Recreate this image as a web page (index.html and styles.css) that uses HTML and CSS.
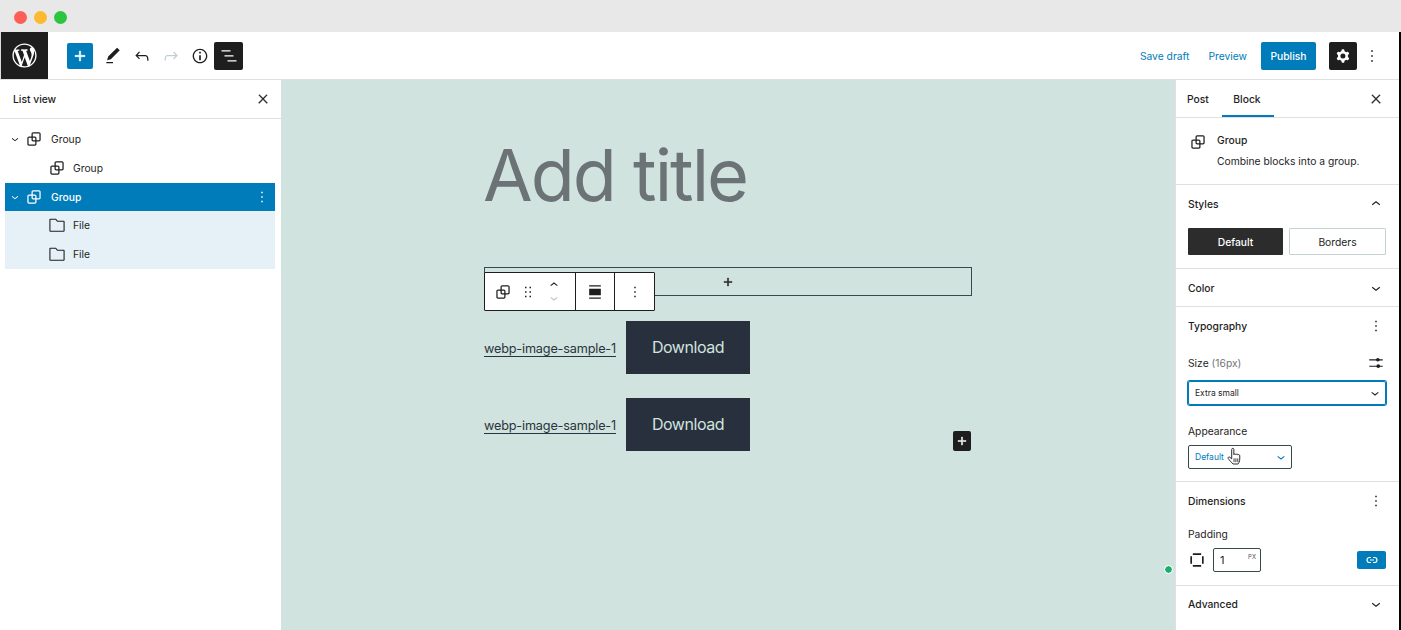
FILE: index.html
```html
<!DOCTYPE html>
<html lang="en">
<head>
<meta charset="utf-8">
<title>Add title</title>
<link rel="stylesheet" href="styles.css">
</head>
<body>
<svg class="sprite" aria-hidden="true">
  <symbol id="i-group" viewBox="0 0 24 24"><path d="M18 4h-7c-1.100 0-2 .9-2 2v3H6c-1.100 0-2 .9-2 2v7c0 1.100.9 2 2 2h7c1.100 0 2-.9 2-2v-3h3c1.100 0 2-.9 2-2V6c0-1.100-.9-2-2-2zm-4.500 14c0 .3-.2.5-.5.5H6c-.3 0-.5-.2-.5-.5v-7c0-.3.2-.5.5-.5h3V13c0 1.100.9 2 2 2h2.500v3zm0-4.500H11c-.3 0-.5-.2-.5-.5v-2.500H13c.3 0 .5.2.5.5v2.500zm5-.5c0 .3-.2.5-.5.5h-3V11c0-1.100-.9-2-2-2h-2.500V6c0-.3.2-.5.5-.5h7c.3 0 .5.2.5.5v7z"/></symbol>
  <symbol id="i-close" viewBox="0 0 24 24"><path stroke="currentColor" stroke-width=".9" d="M13 11.800l6.100-6.300-1-1-6.100 6.200-6.100-6.200-1 1 6.100 6.300-6.500 6.700 1 1 6.500-6.600 6.500 6.600 1-1z"/></symbol>
  <symbol id="i-more" viewBox="0 0 24 24"><path d="M13 19h-2v-2h2v2zm0-6h-2v-2h2v2zm0-6h-2V5h2v2z"/></symbol>
  <symbol id="i-down" viewBox="0 0 24 24"><path d="M17.500 11.600L12 16l-5.500-4.400.9-1.200L12 14l4.500-3.600 1 1.200z"/></symbol>
  <symbol id="i-up" viewBox="0 0 24 24"><path d="M6.500 12.400L12 8l5.500 4.400-.9 1.200L12 10l-4.500 3.600-1-1.200z"/></symbol>
  <symbol id="i-plus" viewBox="0 0 24 24"><path stroke="currentColor" stroke-width=".7" d="M18 11.200h-5.200V6h-1.600v5.200H6v1.600h5.200V18h1.600v-5.200H18z"/></symbol>
  <symbol id="i-folder" viewBox="0 0 24 24"><path fill="none" stroke="currentColor" stroke-width="1.300" d="M4 19.500h16a.5.5 0 00.5-.5V8a.5.5 0 00-.5-.5h-7.500L10.500 5H4a.5.5 0 00-.5.5V19a.5.5 0 00.5.5z"/></symbol>
</svg>

<div class="chrome">
  <span class="light light-red"></span>
  <span class="light light-yellow"></span>
  <span class="light light-green"></span>
</div>

<div class="app">
  <header class="topbar">
    <a class="logo">
      <svg class="logo-svg" viewBox="-2 -2 24 24"><path d="M20 10c0-5.510-4.490-10-10-10C4.480 0 0 4.490 0 10c0 5.520 4.480 10 10 10 5.510 0 10-4.480 10-10zM7.780 15.370L4.370 6.220c.55-.02 1.170-.08 1.170-.08.5-.06.44-1.130-.06-1.110 0 0-1.450.11-2.370.11-.18 0-.37 0-.58-.01C4.120 2.690 6.870 1.110 10 1.110c2.330 0 4.450.87 6.050 2.340-.68-.11-1.650.39-1.650 1.580 0 .74.45 1.360.9 2.100.35.61.55 1.360.55 2.460 0 1.490-1.400 5-1.400 5l-3.030-8.370c.54-.02.82-.17.82-.17.5-.05.44-1.250-.06-1.220 0 0-1.440.12-2.380.12-.87 0-2.330-.12-2.330-.12-.5-.03-.56 1.200-.06 1.220l.92.08 1.260 3.410zM17.410 10c.24-.64.74-1.870.43-4.250.7 1.290 1.050 2.710 1.050 4.250 0 3.290-1.730 6.240-4.400 7.780.97-2.590 1.940-5.200 2.920-7.780zM6.100 18.090C3.120 16.650 1.110 13.530 1.110 10c0-1.300.23-2.480.72-3.590C3.250 10.300 4.670 14.200 6.100 18.090zm4.030-6.630l2.580 6.980c-.86.29-1.760.45-2.710.45-.79 0-1.570-.11-2.290-.33.81-2.380 1.620-4.740 2.420-7.100z"/></svg>
    </a>
    <div class="tools-left">
      <button class="inserter"><svg class="ic20" viewBox="0 0 24 24"><path d="M18 11.200h-5.200V6h-1.600v5.200H6v1.600h5.200V18h1.600v-5.200H18z" stroke="currentColor" stroke-width=".6"/></svg></button>
      <div class="tool-slots">
        <span class="slot"><svg class="ic20" viewBox="0 0 24 24"><path d="M20.100 5.100L16.900 2 6.200 12.700l-1.300 4.400 4.500-1.300L20.100 5.100zM4 20.800h8v-1.500H4v1.500z"/></svg></span>
        <span class="slot"><svg class="ic20" viewBox="0 0 24 24"><path d="M18.300 11.700c-.6-.6-1.400-.9-2.300-.9H6.700l2.900-3.300-1.100-1-4.500 5L8.500 16l1-1-2.700-2.700H16c.5 0 .9.2 1.300.5 1 1 1 3.400 1 4.500v.3h1.500v-.2c0-1.500 0-4.300-1.500-5.700z"/></svg></span>
        <span class="slot slot-off"><svg class="ic20" viewBox="0 0 24 24"><path d="M15.600 6.500l-1.100 1 2.900 3.300H8c-.9 0-1.700.3-2.300.9-1.400 1.500-1.400 4.200-1.400 5.600v.2h1.500v-.3c0-1.100 0-3.500 1-4.500.3-.3.7-.5 1.300-.5h9.200L14.500 15l1.100 1.100 4.600-4.600-4.600-5z"/></svg></span>
        <span class="slot"><svg class="ic20" viewBox="0 0 24 24"><path d="M12 3.200c-4.800 0-8.800 3.900-8.800 8.800 0 4.800 3.900 8.800 8.800 8.800 4.800 0 8.800-3.900 8.800-8.800 0-4.800-4-8.800-8.800-8.800zm0 16c-4 0-7.200-3.300-7.200-7.200C4.800 8 8 4.800 12 4.800s7.200 3.300 7.200 7.200c0 4-3.200 7.200-7.200 7.200zM11 17h2v-6h-2v6zm0-8h2V7h-2v2z"/></svg></span>
      </div>
      <button class="dark-btn listview-btn"><svg class="ic20" viewBox="0 0 24 24"><path d="M13.800 5.200H3v1.500h10.800V5.200zm-3.600 12v1.500H21v-1.500H10.200zm7.200-6H6.600v1.500h10.800v-1.500z"/></svg></button>
    </div>
    <div class="tools-right">
      <a class="link save-link">Save draft</a>
      <a class="link preview-link">Preview</a>
      <button class="publish">Publish</button>
      <button class="dark-btn gear-btn"><svg class="ic20" viewBox="0 0 24 24"><path fill-rule="evenodd" clip-rule="evenodd" d="M10.289 4.836A1 1 0 0111.275 4h1.306a1 1 0 01.987.836l.244 1.466c.787.26 1.503.679 2.108 1.218l1.393-.522a1 1 0 011.216.437l.653 1.130a1 1 0 01-.23 1.273l-1.148.944a6.025 6.025 0 010 2.435l1.149.946a1 1 0 01.23 1.272l-.653 1.130a1 1 0 01-1.216.437l-1.394-.522c-.605.54-1.320.958-2.108 1.218l-.244 1.466a1 1 0 01-.987.836h-1.306a1 1 0 01-.986-.836l-.244-1.466a5.995 5.995 0 01-2.108-1.218l-1.394.522a1 1 0 01-1.217-.436l-.653-1.131a1 1 0 01.23-1.272l1.149-.946a6.026 6.026 0 010-2.435l-1.148-.944a1 1 0 01-.23-1.272l.653-1.131a1 1 0 011.217-.437l1.393.522a5.994 5.994 0 012.108-1.218l.244-1.466zM14.929 12a3 3 0 11-6 0 3 3 0 016 0z"/></svg></button>
      <span class="top-more"><svg class="ic20"><use href="#i-more"/></svg></span>
    </div>
  </header>

  <div class="workspace">
    <aside class="listview">
      <div class="lv-head">
        <span class="lv-title">List view</span>
        <svg class="ic14"><use href="#i-close"/></svg>
      </div>
      <div class="lv-tree">
        <div class="lv-row">
          <svg class="lv-chev"><use href="#i-down"/></svg>
          <svg class="lv-ic"><use href="#i-group"/></svg>
          <span>Group</span>
        </div>
        <div class="lv-row lv-child">
          <svg class="lv-ic"><use href="#i-group"/></svg>
          <span>Group</span>
        </div>
        <div class="lv-row lv-selected">
          <svg class="lv-chev"><use href="#i-down"/></svg>
          <svg class="lv-ic"><use href="#i-group"/></svg>
          <span class="lv-name">Group</span>
          <svg class="lv-more"><use href="#i-more"/></svg>
        </div>
        <div class="lv-row lv-child lv-tint">
          <svg class="lv-ic"><use href="#i-folder"/></svg>
          <span>File</span>
        </div>
        <div class="lv-row lv-child lv-tint">
          <svg class="lv-ic"><use href="#i-folder"/></svg>
          <span>File</span>
        </div>
      </div>
    </aside>

    <main class="canvas">
      <div class="column">
        <h1 class="post-title">Add title</h1>
        <div class="group-box">
          <svg class="ic16"><use href="#i-plus"/></svg>
          <div class="block-toolbar">
            <div class="bt-seg bt-seg-main">
              <svg class="ic20"><use href="#i-group"/></svg>
              <svg class="ic18" viewBox="0 0 24 24"><path d="M8 7h2V5H8v2zm0 6h2v-2H8v2zm0 6h2v-2H8v2zm6-14v2h2V5h-2zm0 8h2v-2h-2v2zm0 6h2v-2h-2v2z"/></svg>
              <span class="bt-movers">
                <svg class="ic16"><use href="#i-up"/></svg>
                <svg class="ic16 bt-off"><use href="#i-down"/></svg>
              </span>
            </div>
            <div class="bt-seg bt-seg-align">
              <svg class="ic20" viewBox="0 0 24 24"><path d="M5 4h14v1.500H5zM5 8h14v8H5zM5 18.500h14V20H5z"/></svg>
            </div>
            <div class="bt-seg bt-seg-more">
              <svg class="ic18"><use href="#i-more"/></svg>
            </div>
          </div>
        </div>
        <div class="file-row">
          <a class="file-link">webp-image-sample-1</a>
          <a class="file-btn">Download</a>
        </div>
        <div class="file-row">
          <a class="file-link">webp-image-sample-1</a>
          <a class="file-btn">Download</a>
        </div>
        <button class="block-plus"><svg class="ic16"><use href="#i-plus"/></svg></button>
      </div>
      <span class="green-dot"></span>
    </main>

    <aside class="sidebar">
      <div class="tabs">
        <span class="tab">Post</span>
        <span class="tab tab-active">Block</span>
        <svg class="ic14 tabs-close"><use href="#i-close"/></svg>
      </div>
      <section class="block-card">
        <svg class="ic20"><use href="#i-group"/></svg>
        <div class="card-text">
          <div class="card-title">Group</div>
          <div class="card-desc">Combine blocks into a group.</div>
        </div>
      </section>
      <section class="panel panel-styles">
        <div class="panel-head"><span>Styles</span><svg class="ic18"><use href="#i-up"/></svg></div>
        <div class="style-btns">
          <span class="style-btn style-on">Default</span>
          <span class="style-btn style-off">Borders</span>
        </div>
      </section>
      <section class="panel panel-color">
        <div class="panel-head"><span>Color</span><svg class="ic18"><use href="#i-down"/></svg></div>
      </section>
      <section class="panel panel-typo">
        <div class="panel-head"><span>Typography</span><svg class="ic18"><use href="#i-more"/></svg></div>
        <div class="size-row">
          <span class="field-label">Size <span class="muted">(16px)</span></span>
          <svg class="ic18" viewBox="0 0 24 24"><path d="M3 7h18v1.500H3zM3 15.500h18V17H3z"/><circle cx="14.500" cy="7.700" r="2.400"/><circle cx="15" cy="16.200" r="2.400"/></svg>
        </div>
        <div class="select select-focus"><span>Extra small</span><svg class="ic16"><use href="#i-down"/></svg></div>
        <div class="field-label appearance-label">Appearance</div>
        <div class="select select-small">
          <span>Default</span>
          <svg class="ic16"><use href="#i-down"/></svg>
          <svg class="hand" viewBox="0 0 16 20"><path fill="#fff" stroke="#1e1e1e" stroke-width="1" stroke-linejoin="round" d="M5 2.500c0-1.600 2.300-1.600 2.300 0V8c.2-1 2-1 2.200 0 .3-.9 2-.8 2.100.3.500-.7 2-.4 2 .9v3.500c0 2.500-1.300 4.800-1.800 5.300H6.500C5.500 17 2 13.500 1.300 12.200c-.7-1.300.8-2.300 1.900-1.300L5 12.500z"/><path stroke="#1e1e1e" stroke-width=".9" d="M7.500 12v4M9.500 12v4M11.500 12v4"/></svg>
        </div>
      </section>
      <section class="panel panel-dim">
        <div class="panel-head"><span>Dimensions</span><svg class="ic18"><use href="#i-more"/></svg></div>
        <div class="field-label padding-label">Padding</div>
        <div class="padding-row">
          <svg class="ic20 pad-ic" viewBox="0 0 24 24"><path d="M7 4h10v2H7zM7 18h10v2H7zM4 7.500h2v9H4zM18 7.500h2v9h-2z"/></svg>
          <div class="num-input"><span>1</span><small>PX</small></div>
          <button class="link-btn"><svg class="ic12" viewBox="0 0 24 24"><path fill="none" stroke="currentColor" stroke-width="2.400" d="M10 7H7a5 5 0 000 10h3M14 7h3a5 5 0 010 10h-3M8 12h8"/></svg></button>
        </div>
      </section>
      <section class="panel panel-adv">
        <div class="panel-head"><span>Advanced</span><svg class="ic18"><use href="#i-down"/></svg></div>
      </section>
    </aside>
  </div>
</div>
</body>
</html>
```
FILE: styles.css
```css
* { box-sizing: border-box; }
html, body { margin: 0; height: 100%; overflow: hidden; }
body {
  display: flex;
  flex-direction: column;
  font-family: Inter, "Liberation Sans", sans-serif;
  font-size: 10.300px;
  color: #1e1e1e;
  background: #fff;
}
svg { fill: currentColor; flex: none; display: block; }
button { border: 0; padding: 0; font: inherit; }
.sprite { width: 0; height: 0; position: absolute; }
.ic12 { width: 12px; height: 12px; }
.ic14 { width: 14px; height: 14px; }
.ic16 { width: 16px; height: 16px; }
.ic18 { width: 18px; height: 18px; }
.ic20 { width: 20px; height: 20px; }

/* window chrome */
.chrome {
  height: 32px;
  flex: none;
  background: #e8e8e8;
  display: flex;
  align-items: center;
  gap: 7px;
  padding: 2px 0 0 13.500px;
}
.light { width: 13px; height: 13px; border-radius: 50%; }
.light-red { background: #fd5f57; }
.light-yellow { background: #fdb92f; }
.light-green { background: #2cc53f; }

.app {
  flex: 1;
  min-height: 0;
  display: flex;
  flex-direction: column;
  border-right: 2px solid #000;
}

/* top bar */
.topbar {
  height: 48px;
  flex: none;
  display: flex;
  align-items: center;
  border-bottom: 1px solid #e0e0e0;
  background: #fff;
}
.logo {
  width: 48px;
  height: 47px;
  flex: none;
  background: #1e1e1e;
  border-left: 1px solid #ddd;
  display: flex;
  align-items: center;
  justify-content: center;
  color: #fff;
}
.logo-svg { width: 29px; height: 29px; }
.tools-left { display: flex; align-items: center; margin-left: 19px; }
.inserter {
  width: 26px;
  height: 26px;
  background: #007cba;
  color: #fff;
  border-radius: 2px;
  display: flex;
  align-items: center;
  justify-content: center;
}
.tool-slots { display: flex; margin-left: 5px; }
.slot { width: 29px; display: flex; justify-content: center; }
.slot-off { color: #c3cdd2; }
.dark-btn {
  width: 29px;
  height: 28px;
  background: #1e1e1e;
  color: #fff;
  border-radius: 2px;
  display: flex;
  align-items: center;
  justify-content: center;
}
.tools-right { margin-left: auto; display: flex; align-items: center; }
.link { color: #007cba; }
.preview-link { margin-left: 19px; }
.publish {
  margin-left: 14px;
  width: 55px;
  height: 28px;
  background: #007cba;
  color: #fff;
  border-radius: 2px;
  font-weight: 500;
}
.gear-btn { margin-left: 13px; width: 28px; }
.top-more { margin: 0 17px 0 5px; }

.workspace { flex: 1; min-height: 0; display: flex; }

/* list view */
.listview { width: 281px; flex: none; background: #fff; }
.lv-head {
  height: 39px;
  padding: 0 11px 0 13px;
  display: flex;
  align-items: center;
  justify-content: space-between;
  border-bottom: 1px solid #e0e0e0;
}
.lv-title { font-weight: 500; }
.lv-tree { padding: 6px 6px 0 5px; }
.lv-row {
  height: 28.800px;
  display: flex;
  align-items: center;
  padding-left: 3px;
}
.lv-chev { width: 14px; height: 14px; }
.lv-ic { width: 20px; height: 20px; margin: 0 7px 0 2px; }
.lv-child { padding-left: 40px; }
.lv-child .lv-ic { margin-right: 6px; }
.lv-selected { background: #007cba; color: #fff; font-weight: 500; }
.lv-name { flex: 1; }
.lv-more { width: 18px; height: 18px; margin-right: 4px; }
.lv-tint { background: #e6f0f7; padding-bottom: 1px; }

/* canvas */
.canvas {
  flex: 1;
  min-width: 0;
  background: #d1e3de;
  position: relative;
  display: flex;
  justify-content: center;
}
.column { width: 488px; position: relative; }
.post-title {
  margin: 0 0 0 -1px;
  height: 187px;
  padding-top: 46px;
  font-size: 72px;
  line-height: 97px;
  font-weight: 400;
  letter-spacing: -2px;
  color: #6c7377;
}
.group-box {
  height: 29px;
  border: 1px solid #3a4a4a;
  position: relative;
  display: flex;
  align-items: center;
  justify-content: center;
}
.block-toolbar {
  position: absolute;
  left: -1px;
  top: 4px;
  height: 39px;
  display: flex;
  background: #fff;
  border: 1px solid #1e1e1e;
  border-radius: 1px;
}
.bt-seg { display: flex; align-items: center; justify-content: center; }
.bt-seg + .bt-seg { border-left: 1px solid #1e1e1e; }
.bt-seg-main { width: 90px; justify-content: flex-start; padding-left: 8px; gap: 5.500px; }
.bt-seg-align { width: 39px; }
.bt-seg-more { width: 40px; }
.bt-movers { display: flex; flex-direction: column; margin-left: 3.500px; }
.bt-movers svg { margin: -1.500px 0; }
.bt-off { color: #b8c4c8; }
.file-row {
  display: flex;
  align-items: center;
  gap: 10px;
  margin-top: 24px;
  height: 53px;
}
.group-box + .file-row { margin-top: 25px; }
.file-link {
  font-size: 12.700px;
  letter-spacing: -.18px;
  color: #2a3440;
  text-decoration: underline;
  text-underline-offset: 3px;
  text-decoration-thickness: 1px;
  padding-top: 1px;
}
.file-btn {
  width: 124px;
  height: 53px;
  padding-bottom: 2px;
  background: #28303d;
  color: #d1e3de;
  font-size: 16px;
  letter-spacing: -.45px;
  display: flex;
  align-items: center;
  justify-content: center;
}
.block-plus {
  position: absolute;
  top: 351px;
  right: 1px;
  width: 18px;
  height: 20px;
  background: #1e1e1e;
  color: #fff;
  border-radius: 2px;
  display: flex;
  align-items: center;
  justify-content: center;
}
.green-dot {
  position: absolute;
  right: 3px;
  bottom: 57px;
  width: 7px;
  height: 7px;
  border-radius: 50%;
  background: #1aaf6c;
  outline: 1px solid #fff;
}

/* right sidebar */
.sidebar {
  width: 224px;
  flex: none;
  background: #fff;
  border-left: 1px solid #e0e0e0;
  overflow: hidden;
}
.tabs {
  height: 38px;
  display: flex;
  align-items: stretch;
  border-bottom: 1px solid #e0e0e0;
  padding-left: 11px;
  margin-bottom: 1px;
}
.tab { display: flex; align-items: center; font-weight: 500; }
.tab-active {
  margin-left: 13px;
  padding: 0 13.500px 0 11.500px;
  box-shadow: inset 0 -2px 0 #007cba;
}
.tabs-close { margin: 12px 16px 0 auto; }
.block-card {
  height: 66px;
  padding: 13px 13px 0 12px;
  display: flex;
  gap: 9px;
  border-bottom: 1px solid #e0e0e0;
}
.card-title { font-weight: 500; margin-top: 2px; }
.card-desc { margin-top: 8px; line-height: 14px; }
.panel { padding: 0 13px 0 12px; border-bottom: 1px solid #e0e0e0; }
.panel-head {
  display: flex;
  justify-content: space-between;
  align-items: center;
  height: 38px;
  font-weight: 500;
  margin-right: 1px;
}
.panel-styles { height: 84px; }
.panel-styles .panel-head { height: 38px; }
.style-btns { display: flex; gap: 6px; margin-top: 5px; }
.style-btn {
  flex: 1;
  height: 27px;
  display: flex;
  align-items: center;
  justify-content: center;
  border-radius: 1px;
}
.style-on { background: #2c2c2c; color: #fff; font-weight: 500; }
.style-off { border: 1px solid #c4d2d2; }
.panel-color { height: 38px; }
.panel-typo { height: 175px; }
.size-row {
  display: flex;
  justify-content: space-between;
  align-items: center;
  margin-top: 9px;
  height: 18px;
  margin-right: 1px;
}
.muted { color: #757575; }
.field-label { display: block; }
.select {
  display: flex;
  align-items: center;
  justify-content: space-between;
  border: 1px solid #1e1e1e;
  border-radius: 2px;
  height: 24px;
  padding: 0 2px 0 6px;
  font-size: 8.500px;
  margin-top: 9px;
  position: relative;
}
.select-focus { border-color: #007cba; box-shadow: 0 0 0 1px #007cba; }
.appearance-label { margin-top: 20px; line-height: 13px; }
.select-small {
  width: 104px;
  color: #007cba;
  margin-top: 7px;
  border-color: #3a4a4a;
}
.hand {
  position: absolute;
  left: 38px;
  top: 1px;
  width: 15px;
  height: 19px;
}
.panel-dim { height: 104px; }
.padding-label { margin-top: 8px; line-height: 13px; }
.padding-row { display: flex; align-items: center; margin-top: 7px; height: 24px; }
.pad-ic { margin-left: -1px; }
.num-input {
  width: 48px;
  height: 24px;
  margin-left: 6px;
  border: 1px solid #3a4a4a;
  border-radius: 2px;
  display: flex;
  justify-content: space-between;
  padding: 0 4px 0 6px;
  font-size: 11px;
  line-height: 23px;
}
.num-input small { font-size: 6px; line-height: 16px; color: #555; }
.link-btn {
  margin-left: auto;
  width: 29px;
  height: 18px;
  background: #007cba;
  color: #fff;
  border-radius: 2px;
  display: flex;
  align-items: center;
  justify-content: center;
}
.panel-adv { border-bottom: 0; }
.panel-adv .panel-head { height: 36px; }
```
